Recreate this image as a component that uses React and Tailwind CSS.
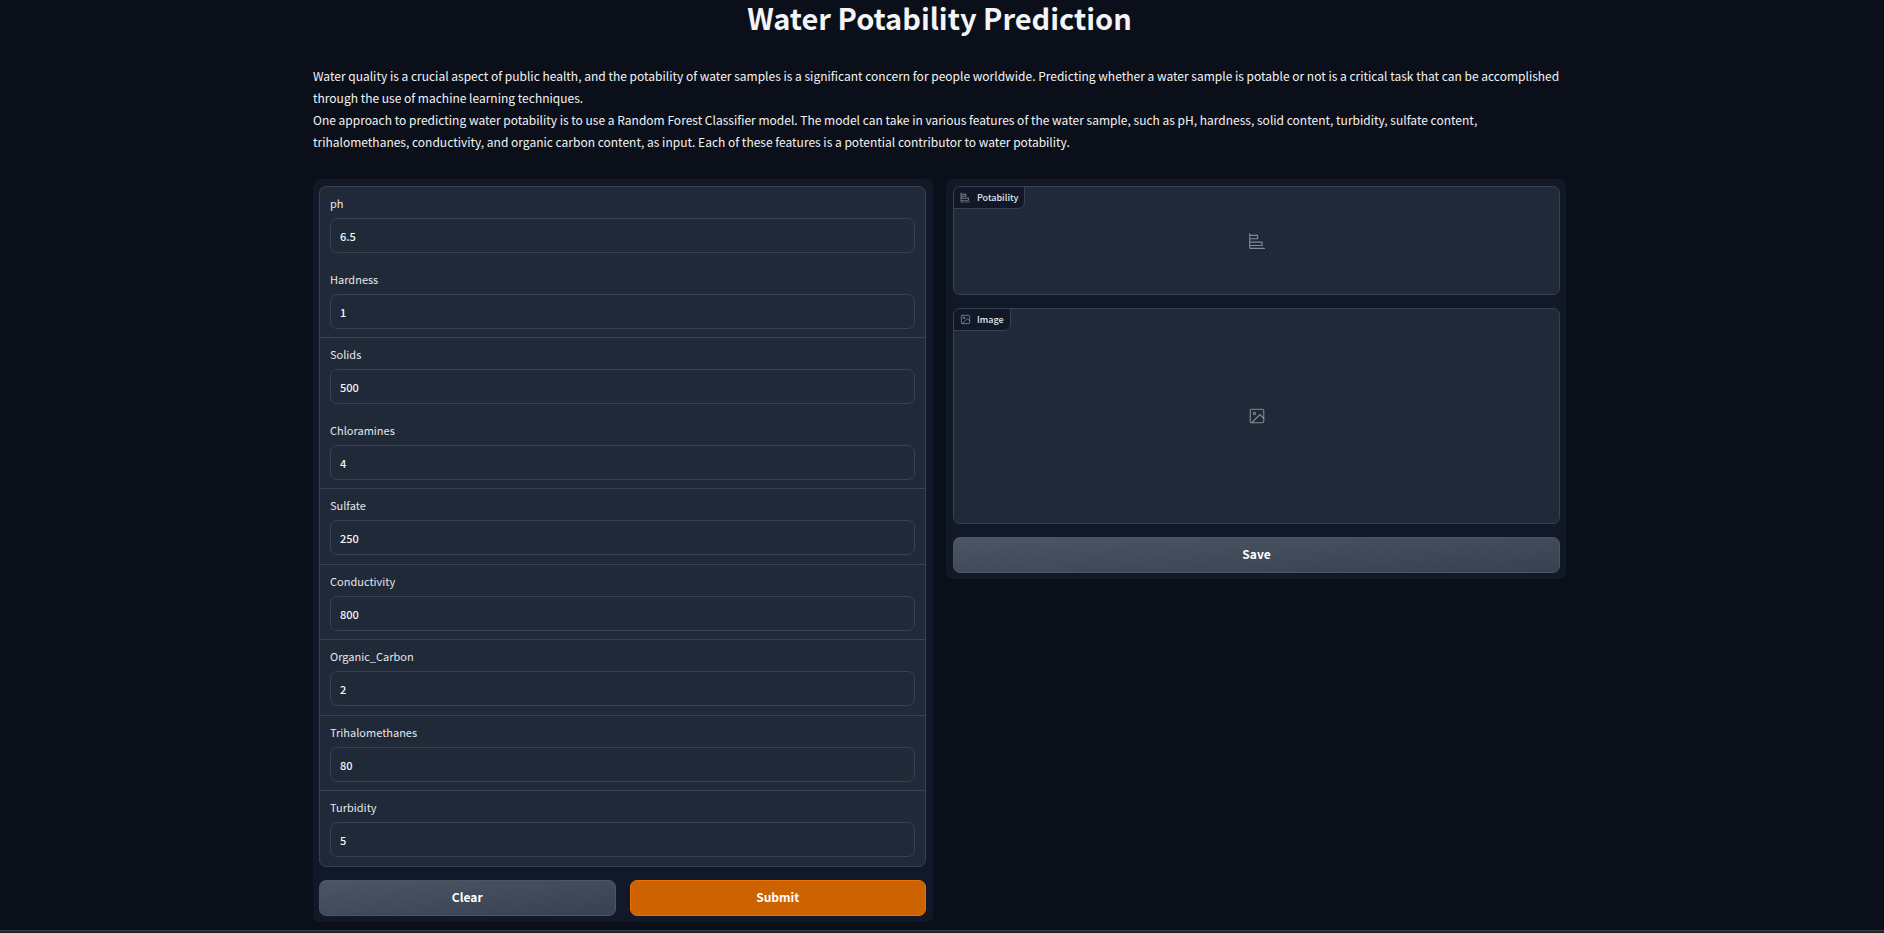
import React from "react";

const fields = [
  { name: "ph", value: "6.5", divider: false },
  { name: "Hardness", value: "1", divider: false },
  { name: "Solids", value: "500", divider: true },
  { name: "Chloramines", value: "4", divider: false },
  { name: "Sulfate", value: "250", divider: true },
  { name: "Conductivity", value: "800", divider: true },
  { name: "Organic_Carbon", value: "2", divider: true },
  { name: "Trihalomethanes", value: "80", divider: true },
  { name: "Turbidity", value: "5", divider: true },
];

function ChartIcon({ className }) {
  return (
    <svg viewBox="0 0 32 32" className={className} aria-hidden="true">
      <path
        fill="currentColor"
        d="M4 2H2v26a2 2 0 0 0 2 2h26v-2H4v-3h22v-8H4v-4h14V5H4Zm20 17v4H4v-4ZM16 7v4H4V7Z"
      />
    </svg>
  );
}

function ImageIcon({ className }) {
  return (
    <svg
      viewBox="0 0 24 24"
      fill="none"
      stroke="currentColor"
      strokeWidth="1.5"
      strokeLinecap="round"
      strokeLinejoin="round"
      className={className}
      aria-hidden="true"
    >
      <rect x="3" y="3" width="18" height="18" rx="2" ry="2" />
      <circle cx="8.5" cy="8.5" r="1.5" />
      <polyline points="21 15 16 10 5 21" />
    </svg>
  );
}

function Field({ name, value, divider }) {
  return (
    <div
      className={
        "border-t px-[10px] pt-[6px] odd:pb-[9px] even:pb-2 first:border-t-0 last:pb-2 " +
        (divider ? "border-[#374151]" : "border-transparent")
      }
    >
      <label htmlFor={name} className="block text-[11px] leading-5 text-gray-200">
        {name}
      </label>
      <input
        id={name}
        type="text"
        inputMode="decimal"
        defaultValue={value}
        className="mt-[5px] block h-[35px] w-full rounded-[7px] border border-[#374151] bg-[#1f2937] px-[9px] text-[11px] font-medium text-gray-100 outline-none focus:border-gray-500"
      />
    </div>
  );
}

function OutputBlock({ label, Icon, className }) {
  return (
    <section
      className={
        "relative flex items-center justify-center overflow-hidden rounded-[7px] border border-[#374151] bg-[#1f2937] " +
        className
      }
    >
      <div className="absolute -left-px -top-px flex h-[23px] items-center gap-[6px] rounded-br-[7px] border border-[#374151] bg-[#111827] px-[6px] text-[9px] leading-4 font-medium text-gray-200">
        <Icon className="size-[11px] text-gray-400" />
        <span>{label}</span>
      </div>
      <Icon className="size-[18px] text-gray-400/80" />
    </section>
  );
}

const buttonBase =
  "h-9 flex-1 rounded-[7px] border pb-[2px] text-[12px] font-bold text-white";
const secondary =
  buttonBase + " border-[#4b5563] bg-linear-to-br from-[#4b5563] to-[#374151]";

export default function App() {
  return (
    <div className="flex min-h-screen flex-col bg-[#0b0f19] font-['Noto_Sans_CJK_SC',sans-serif] text-gray-100">
      <main className="mx-auto w-full max-w-[1258px] grow pr-[5px]">
        <h1 className="text-center text-[29px] leading-[34px] font-bold">
          Water Potability Prediction
        </h1>
        <div className="mt-[31px] text-[12px] leading-[22px]">
          <p>
            Water quality is a crucial aspect of public health, and the potability of water
            samples is a significant concern for people worldwide. Predicting whether a water
            sample is potable or not is a critical task that can be accomplished through the use
            of machine learning techniques.
          </p>
          <p>
            One approach to predicting water potability is to use a Random Forest Classifier
            model. The model can take in various features of the water sample, such as pH,
            hardness, solid content, turbidity, sulfate content, trihalomethanes, conductivity,
            and organic carbon content, as input. Each of these features is a potential
            contributor to water potability.
          </p>
        </div>
        <div className="mt-[26px] flex items-start gap-[13px]">
          <form
            onSubmit={(e) => e.preventDefault()}
            className="min-w-0 flex-1 rounded-[7px] bg-[#111827] pt-[7px] pr-[7px] pb-[6px] pl-[6px]"
          >
            <div className="overflow-hidden rounded-[7px] border border-[#374151] bg-[#1f2937]">
              {fields.map((f) => (
                <Field key={f.name} {...f} />
              ))}
            </div>
            <div className="mt-[13px] flex gap-[14px]">
              <button type="reset" className={secondary}>
                Clear
              </button>
              <button
                type="submit"
                className={buttonBase + " border-[#ea7000] bg-[#cc6200]"}
              >
                Submit
              </button>
            </div>
          </form>
          <div className="flex min-w-0 flex-1 flex-col gap-[13px] rounded-[7px] bg-[#111827] pt-[7px] pr-[6px] pb-[6px] pl-[7px]">
            <OutputBlock label="Potability" Icon={ChartIcon} className="h-[109px]" />
            <OutputBlock label="Image" Icon={ImageIcon} className="h-[216px]" />
            <div className="flex">
              <button type="button" className={secondary}>
                Save
              </button>
            </div>
          </div>
        </div>
      </main>
      <footer className="mt-2 h-1 border-t border-[#3b4143] bg-[#1b2523]" />
    </div>
  );
}
